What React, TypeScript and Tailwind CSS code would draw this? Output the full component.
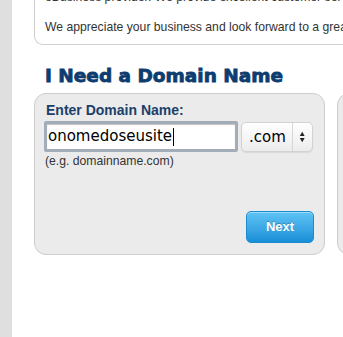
export default function App() {
  return (
    <div className="flex h-[337px] overflow-hidden bg-white font-['Liberation_Sans',Arial,sans-serif]">
      <div className="w-3 shrink-0 bg-[#dfdfdf]" />
      <div className="flex-1 pl-[22px]">
        {/* intro card, cut off at the top */}
        <div className="-mt-[10px] w-[340px] rounded-bl-[9px] border-b border-l border-[#cfcfcf] pb-[9px] pl-[10px] text-[12.2px] leading-[15px] text-[#333]">
          <p className="whitespace-nowrap">eBusiness provider. We provide excellent customer service</p>
          <p className="mt-[15px] whitespace-nowrap">We appreciate your business and look forward to a great</p>
        </div>

        <h2 className="mt-[19px] pl-[11px] text-[18.5px] font-bold leading-[24px] text-[#0c3c70] font-['DejaVu_Sans',sans-serif] [-webkit-text-stroke:0.8px_#0c3c70]">
          I Need a Domain Name
        </h2>

        <div className="mt-[5px] flex gap-3">
          <div className="flex h-[162px] w-[291px] shrink-0 flex-col rounded-[12px] border border-[#cdcdcd] bg-[#ebebeb] pb-[11px] pl-[9px] pr-[10px] pt-[8px]">
            <div className="pl-[2px] text-[14px] font-bold leading-[16px] text-[#1c3f69]">Enter Domain Name:</div>
            <div className="mt-[3px] flex items-start gap-[3px]">
              <div className="flex h-[31px] w-[194px] items-center rounded-[2px] border-[3px] border-[#a3adb9] bg-white pl-[1px] shadow-[inset_0_1px_1px_rgba(0,0,0,0.25)]">
                <span className="text-[15px] leading-none text-black font-['DejaVu_Sans',sans-serif]">onomedoseusite</span>
                <span className="ml-[1px] h-[18px] w-px bg-black" />
              </div>
              <div className="mt-[1px] flex h-[30px] w-[72px] items-center rounded-[5px] border border-[#d2d2d2] bg-gradient-to-b from-white to-[#ececec] shadow-[0_1px_1px_rgba(0,0,0,0.08)]">
                <span className="w-[51px] pl-[7px] text-[15px] leading-none text-black font-['DejaVu_Sans',sans-serif]">.com</span>
                <span className="h-full w-px bg-[#d6d6d6]" />
                <svg width="20" height="14" viewBox="0 0 20 14">
                  <path d="M7 6 L9.5 1.5 L12 6 Z" fill="#222" />
                  <path d="M7 8 L9.5 12.5 L12 8 Z" fill="#222" />
                </svg>
              </div>
            </div>
            <div className="mt-[2px] pl-[1px] text-[12.2px] leading-[14px] text-[#333]">(e.g. domainname.com)</div>
            <button className="mt-auto self-end h-[32px] w-[68px] rounded-[5px] border border-[#1b8ccf] bg-gradient-to-b from-[#5ec4f4] to-[#168fd8] text-[13px] font-bold text-white [text-shadow:0_-1px_0_rgba(0,0,0,0.25)] shadow-[inset_0_1px_0_rgba(255,255,255,0.4)]">
              Next
            </button>
          </div>
          <div className="h-[162px] w-[200px] shrink-0 rounded-[12px] border border-[#cdcdcd] bg-[#ebebeb]" />
        </div>
      </div>
    </div>
  )
}
